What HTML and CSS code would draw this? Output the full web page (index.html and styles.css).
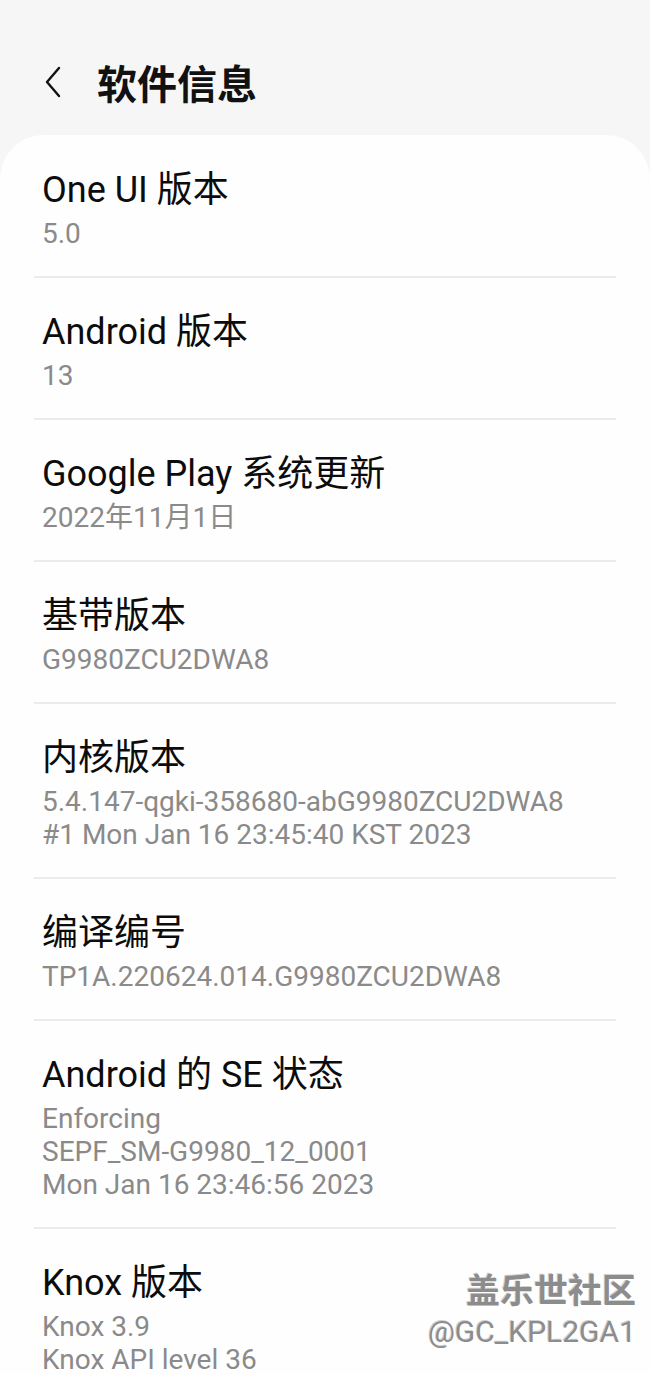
FILE: index.html
```html
<!DOCTYPE html>
<html lang="zh-CN">
<head>
  <meta charset="UTF-8" />
  <title>软件信息</title>
  <meta name="viewport" content="width=device-width, initial-scale=1.0" />
  <link rel="stylesheet" href="styles.css">
</head>
<body>

  <div class="top-bar">
    <span class="back">
      <svg width="18" height="32" viewBox="0 0 18 32">
        <path d="M15 2 L3 16 L15 30" fill="none" stroke="#111" stroke-width="2.4" stroke-linecap="round" stroke-linejoin="round"/>
      </svg>
    </span>
    <h1>软件信息</h1>
  </div>

  <div class="card">
    <div class="item">
      <div class="item-title">One UI 版本</div>
      <div class="item-value">5.0</div>
    </div>
    <div class="item">
      <div class="item-title">Android 版本</div>
      <div class="item-value">13</div>
    </div>
    <div class="item">
      <div class="item-title">Google Play 系统更新</div>
      <div class="item-value">2022年11月1日</div>
    </div>
    <div class="item">
      <div class="item-title">基带版本</div>
      <div class="item-value">G9980ZCU2DWA8</div>
    </div>
    <div class="item">
      <div class="item-title">内核版本</div>
      <div class="item-value">5.4.147-qgki-358680-abG9980ZCU2DWA8</div>
      <div class="item-value">#1 Mon Jan 16 23:45:40 KST 2023</div>
    </div>
    <div class="item">
      <div class="item-title">编译编号</div>
      <div class="item-value">TP1A.220624.014.G9980ZCU2DWA8</div>
    </div>
    <div class="item">
      <div class="item-title">Android 的 SE 状态</div>
      <div class="item-value">Enforcing</div>
      <div class="item-value">SEPF_SM-G9980_12_0001</div>
      <div class="item-value">Mon Jan 16 23:46:56 2023</div>
    </div>
    <div class="item last">
      <div class="item-title">Knox 版本</div>
      <div class="item-value">Knox 3.9</div>
      <div class="item-value">Knox API level 36</div>
    </div>
  </div>

  <div class="watermark">
    <div class="wm-name">盖乐世社区</div>
    <div class="wm-user">@GC_KPL2GA1</div>
  </div>

</body>
</html>
```

FILE: styles.css
```css
body {
  font-family: Roboto, "Noto Sans CJK SC", sans-serif;
  background-color: #f6f6f6;
  margin: 0;
  height: 1374px;
  overflow: hidden;
  position: relative;
}

.top-bar {
  display: flex;
  align-items: center;
  height: 135px;
  padding: 29px 0 0 44px;
  box-sizing: border-box;
}

.back {
  display: flex;
  width: 53px;
}

h1 {
  margin: 0;
  font-size: 40px;
  font-weight: bold;
  color: #111;
  font-family: "Noto Sans CJK SC", sans-serif;
}

.card {
  background-color: #fefefe;
  border-radius: 44px;
  padding-top: 1px;
  min-height: 1300px;
}

.item {
  margin: 0 34px;
  padding: 30px 8px 26px;
  border-bottom: 2px solid #ebebeb;
}

.item.last {
  border-bottom: none;
}

.item-title {
  font-size: 36px;
  line-height: 48px;
  color: #0c0c0c;
  margin-bottom: 3px;
}

.item-value {
  font-size: 28px;
  line-height: 33px;
  color: #8a8a8a;
}

.watermark {
  position: absolute;
  right: 14px;
  top: 1266px;
  text-align: right;
  color: #8c8c8c;
  text-shadow: 1px 1px 0 #fff, -1px -1px 0 #d0d0d0;
}

.wm-name {
  font-family: "Noto Sans CJK SC", sans-serif;
  font-size: 34px;
  font-weight: bold;
  line-height: 46px;
}

.wm-user {
  font-size: 30px;
  line-height: 40px;
}
```
